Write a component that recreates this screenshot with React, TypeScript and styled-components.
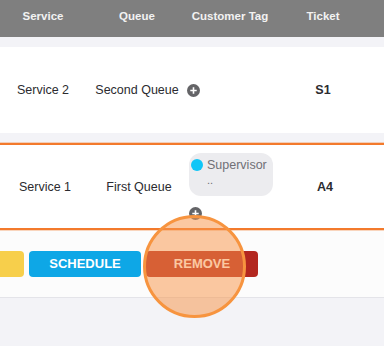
import React from 'react';
import styled, { createGlobalStyle } from 'styled-components';

const GlobalStyle = createGlobalStyle`
  html, body {
    margin: 0;
    padding: 0;
    background: #f3f3f7;
    font-family: "Liberation Sans", Arial, sans-serif;
  }
`;

const Page = styled.div`
  position: relative;
  width: 384px;
  height: 346px;
  overflow: hidden;
  background: #f3f3f7;
`;

const Columns = styled.div`
  display: grid;
  grid-template-columns: 86px 102px 84px 102px;
`;

const HeaderBar = styled(Columns)`
  height: 37px;
  box-sizing: border-box;
  padding-top: 9px;
  background: #7f7f7f;
`;

const HeadCell = styled.div`
  text-align: center;
  font-size: 11.5px;
  line-height: 14px;
  font-weight: bold;
  color: #f2f2f2;
`;

const List = styled.div`
  display: flex;
  flex-direction: column;
  gap: 10px;
  padding-top: 10px;
`;

const Row = styled(Columns)<{ selected?: boolean }>`
  align-items: center;
  box-sizing: border-box;
  height: ${p => (p.selected ? 87 : 86)}px;
  margin: 0 -4px;
  padding: 0 4px;
  background: #fff;
  border: ${p => (p.selected ? '2px solid #f37a2c' : 'none')};
  box-shadow: ${p => (p.selected ? '0 0 0 1px rgba(243, 122, 44, 0.3)' : 'none')};
`;

const Cell = styled.div<{ bold?: boolean }>`
  text-align: center;
  font-size: 12.5px;
  font-weight: ${p => (p.bold ? 'bold' : 'normal')};
  color: #2b2b2f;
`;

const TagCell = styled.div`
  display: flex;
  flex-direction: column;
  align-items: flex-start;
  gap: 11px;
  margin-left: -1px;
`;

const TagBox = styled.div`
  box-sizing: border-box;
  width: 84px;
  height: 43px;
  padding: 5px 2px 0 2px;
  border-radius: 12px;
  background: #ececef;
`;

const TagLine = styled.div`
  display: flex;
  align-items: center;
  gap: 4px;
  font-size: 12.5px;
  color: #707076;
`;

const Dot = styled.span`
  width: 12px;
  height: 12px;
  border-radius: 50%;
  background: #0fc6f7;
`;

const TagNote = styled.div`
  margin: 2px 0 0 16px;
  font-size: 11px;
  color: #707076;
`;

const ActionBar = styled.div`
  display: flex;
  align-items: center;
  gap: 5px;
  height: 67px;
  margin-left: -88px;
  background: #fcfcfc;
  border-bottom: 1px solid #e4e4e9;
`;

const Button = styled.button<{ tone: string }>`
  width: 112px;
  height: 26px;
  border: none;
  border-radius: 4px;
  background: ${p => p.tone};
  color: #fff;
  font-family: "Liberation Sans", Arial, sans-serif;
  font-size: 13px;
  font-weight: bold;
  padding: 0;
`;

const Spot = styled.div`
  position: absolute;
  left: 143px;
  top: 215px;
  width: 103px;
  height: 103px;
  box-sizing: border-box;
  border-radius: 50%;
  border: 3px solid #f7943f;
  background: rgba(247, 150, 75, 0.52);
  pointer-events: none;
`;

const PlusIcon = () => (
  <svg width="13" height="13" viewBox="0 0 13 13">
    <circle cx="6.5" cy="6.5" r="6.5" fill="#646467" />
    <path d="M6.5 3.3v6.4M3.3 6.5h6.4" stroke="#fff" strokeWidth="1.6" />
  </svg>
);

export default function App() {
  return (
    <Page>
      <GlobalStyle />
      <HeaderBar>
        <HeadCell>Service</HeadCell>
        <HeadCell>Queue</HeadCell>
        <HeadCell>Customer Tag</HeadCell>
        <HeadCell>Ticket</HeadCell>
      </HeaderBar>
      <List>
        <Row>
          <Cell>Service 2</Cell>
          <Cell>Second Queue</Cell>
          <TagCell>
            <PlusIcon />
          </TagCell>
          <Cell bold>S1</Cell>
        </Row>
        <Row selected>
          <Cell>Service 1</Cell>
          <Cell>First Queue</Cell>
          <TagCell>
            <TagBox>
              <TagLine>
                <Dot />
                Supervisor
              </TagLine>
              <TagNote>..</TagNote>
            </TagBox>
            <PlusIcon />
          </TagCell>
          <Cell bold>A4</Cell>
        </Row>
      </List>
      <ActionBar>
        <Button tone="#f7cf4b" aria-label="Assign" />
        <Button tone="#0ea7e6">SCHEDULE</Button>
        <Button tone="#b3271f">REMOVE</Button>
      </ActionBar>
      <Spot />
    </Page>
  );
}
